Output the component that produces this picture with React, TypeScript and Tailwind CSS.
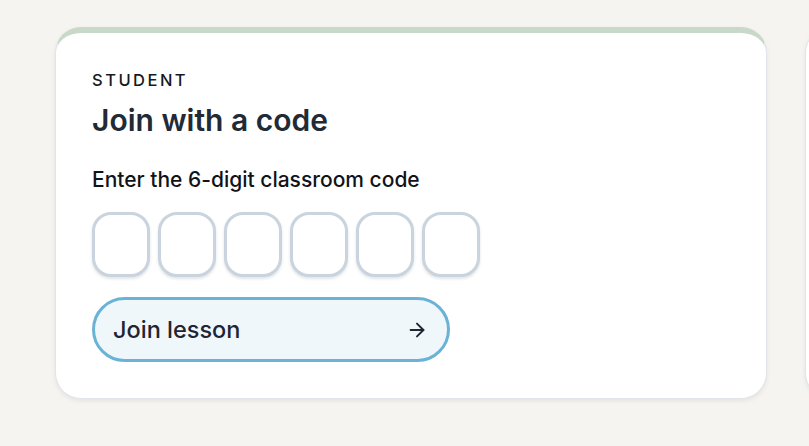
import { ArrowRight } from "lucide-react";

function CodeBoxes() {
  return (
    <div className="mt-[19px] flex gap-[8px]">
      {[0, 1, 2, 3, 4, 5].map((i) => (
        <input
          key={i}
          maxLength={1}
          inputMode="numeric"
          aria-label={`Digit ${i + 1}`}
          className="h-[65px] w-[58px] rounded-[19px] border-[3px] border-[#c9d4de] bg-white text-center text-2xl shadow-[0_2px_3px_rgba(15,30,50,0.12)] outline-none"
        />
      ))}
    </div>
  );
}

export default function App() {
  return (
    <div
      className="h-[446px] w-[809px] overflow-hidden bg-[#f5f4f0]"
      style={{ fontFamily: "Inter, 'Noto Sans', sans-serif" }}
    >
      <div className="flex gap-[38px] pl-[55px] pt-[27px]">
        <section className="w-[712px] shrink-0 rounded-[26px] border border-t-[6px] border-[#e1e5ea] border-t-[#c8d8c9] bg-white px-[36px] pb-[35px] pt-[36px] shadow-[0_2px_5px_rgba(0,0,0,0.07)]">
          <div className="text-[16.5px] font-medium leading-[22px] tracking-[0.15em] text-[#161a20]">
            STUDENT
          </div>
          <h2 className="mt-[11px] text-[30px] font-semibold leading-[36px] text-[#222a36]">
            Join with a code
          </h2>
          <label className="mt-[28px] block text-[21px] font-medium leading-[27px] text-[#111318]">
            Enter the 6-digit classroom code
          </label>
          <CodeBoxes />
          <button className="mt-[20px] flex h-[65px] w-[358px] items-center justify-between rounded-full border-[3px] border-[#6bb3d6] bg-[#eff7fb] pl-[18px] pr-[19px] text-[23.5px] font-medium text-[#1f2533]">
            <span>Join lesson</span>
            <ArrowRight className="h-[22px] w-[22px]" strokeWidth={2.1} />
          </button>
        </section>
        <section className="h-[372px] w-[712px] shrink-0 rounded-[26px] border border-[#e1e5ea] bg-white shadow-[0_2px_5px_rgba(0,0,0,0.07)]" />
      </div>
    </div>
  );
}
